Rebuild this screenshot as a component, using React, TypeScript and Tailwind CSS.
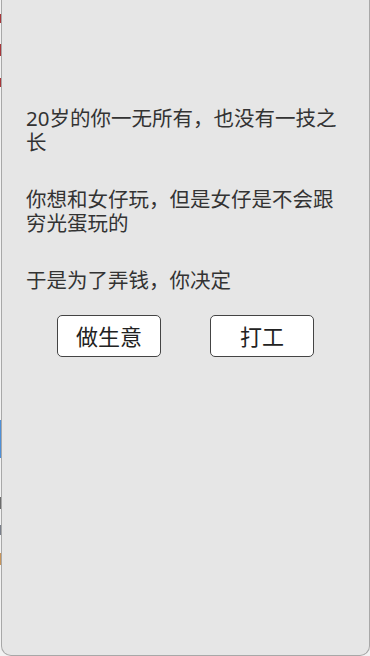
import React from 'react';

const paragraphs = [
  '20岁的你一无所有，也没有一技之长',
  '你想和女仔玩，但是女仔是不会跟穷光蛋玩的',
  '于是为了弄钱，你决定',
];

const choices = ['做生意', '打工'];

// bits of the page peeking out behind the sheet on the left edge
const edgeBits = [
  { top: 14, h: 9, color: '#a8363a' },
  { top: 44, h: 12, color: '#a8363a' },
  { top: 78, h: 9, color: '#a8363a' },
  { top: 420, h: 38, color: '#4f8fd6' },
  { top: 497, h: 12, color: '#6b6b6b' },
  { top: 525, h: 10, color: '#7a7f8a' },
  { top: 553, h: 12, color: '#c8955a' },
];

export default function App() {
  return (
    <div
      className="relative w-[370px] h-[656px] overflow-hidden bg-[#f2f2f2]"
      style={{ fontFamily: '"Noto Sans", "Noto Sans CJK SC", sans-serif' }}
    >
      {edgeBits.map((b) => (
        <div
          key={b.top}
          className="absolute left-0 w-[1px]"
          style={{ top: b.top, height: b.h, backgroundColor: b.color }}
        />
      ))}

      <div className="ml-[1px] w-[369px] h-[656px] bg-[#e6e6e6] border-x border-b border-[#a8a8a8] rounded-b-[10px]">
        <div className="pt-[106px] pl-[24px] w-[338px] text-[20.5px] leading-[24px] text-[#333]">
          {paragraphs.map((p, i) => (
            <p key={i} className={i > 0 ? 'mt-[33px]' : ''}>
              {p}
            </p>
          ))}
        </div>

        <div className="mt-[23px] flex justify-center gap-[49px]">
          {choices.map((c) => (
            <button
              key={c}
              className="w-[104px] h-[42px] bg-white border border-[#444] rounded-[5px] text-[22px] text-[#222] flex items-center justify-center"
            >
              {c}
            </button>
          ))}
        </div>
      </div>
    </div>
  );
}
